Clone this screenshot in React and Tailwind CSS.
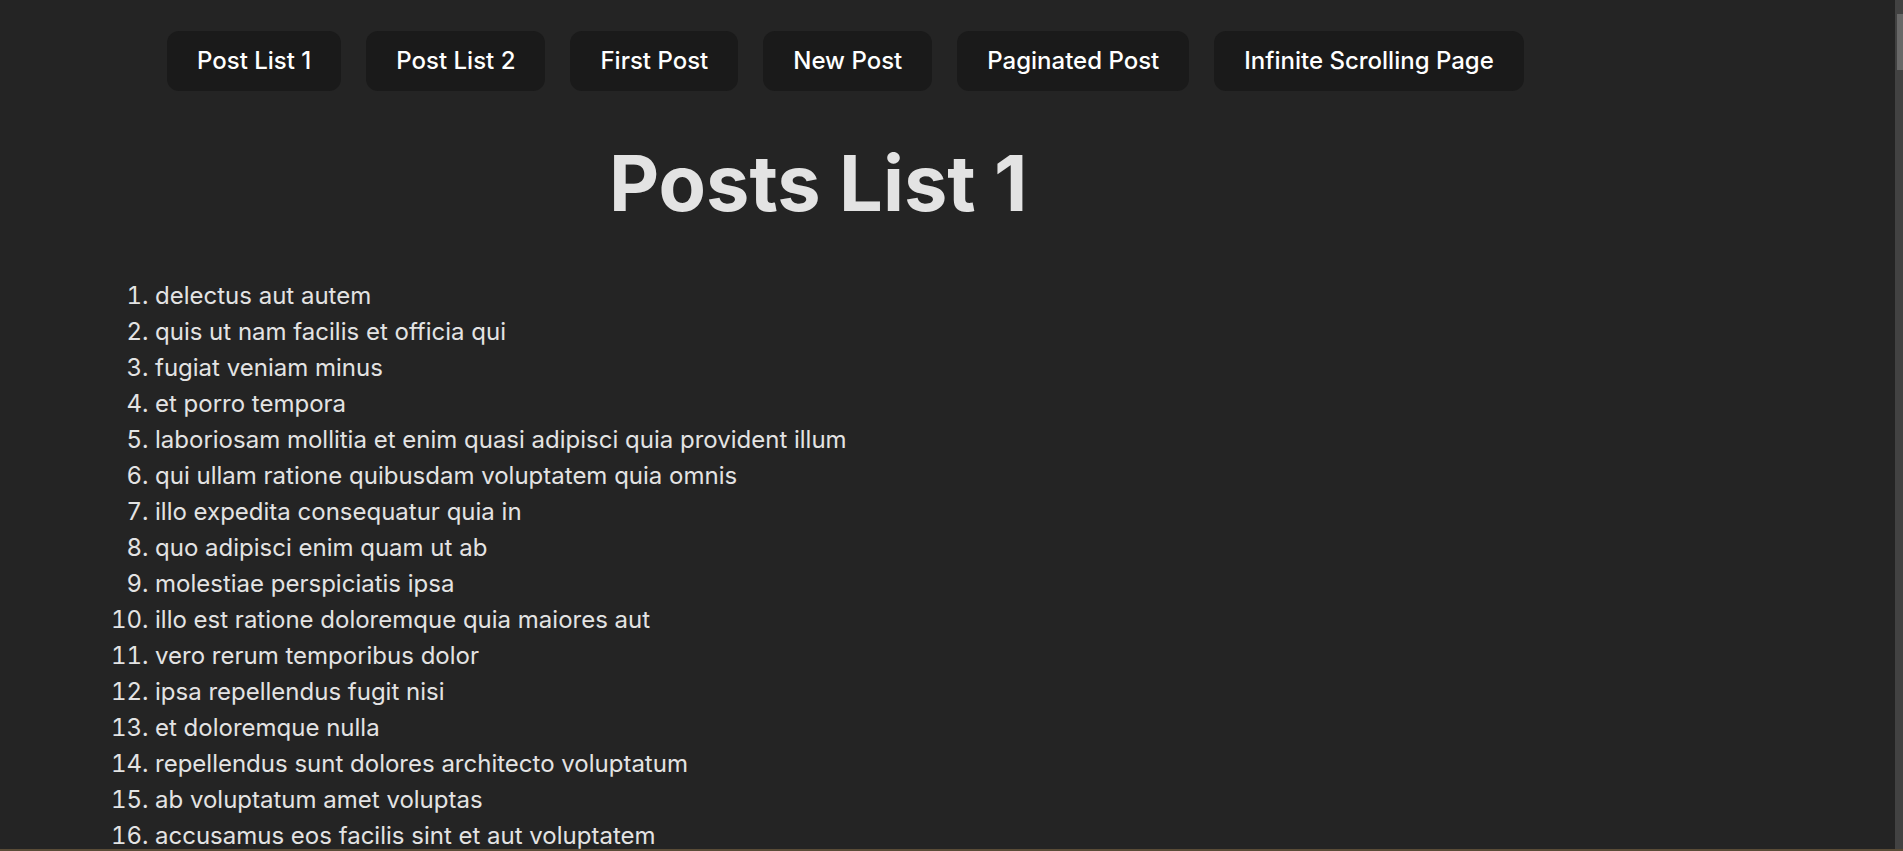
import React from 'react';

const links = [
  'Post List 1',
  'Post List 2',
  'First Post',
  'New Post',
  'Paginated Post',
  'Infinite Scrolling Page',
];

const todos = [
  'delectus aut autem',
  'quis ut nam facilis et officia qui',
  'fugiat veniam minus',
  'et porro tempora',
  'laboriosam mollitia et enim quasi adipisci quia provident illum',
  'qui ullam ratione quibusdam voluptatem quia omnis',
  'illo expedita consequatur quia in',
  'quo adipisci enim quam ut ab',
  'molestiae perspiciatis ipsa',
  'illo est ratione doloremque quia maiores aut',
  'vero rerum temporibus dolor',
  'ipsa repellendus fugit nisi',
  'et doloremque nulla',
  'repellendus sunt dolores architecto voluptatum',
  'ab voluptatum amet voluptas',
  'accusamus eos facilis sint et aut voluptatem',
  'quo laboriosam deleniti aut qui',
  'dolorum est consequatur ea mollitia in culpa',
  'molestiae ipsa aut voluptatibus pariatur dolor nihil',
  'ullam nobis libero sapiente ad optio sint',
  'vel voluptatem repellat nihil placeat corporis',
  'distinctio vitae autem nihil ut molestias quo',
  'et itaque necessitatibus maxime molestiae qui quas velit',
  'adipisci non ad dicta qui amet quaerat doloribus ea',
  'voluptas quo tenetur perspiciatis explicabo natus',
  'aliquam aut quasi',
  'veritatis pariatur delectus',
  'nesciunt totam sit blanditiis sit',
  'laborum aut in quam',
  'nemo perspiciatis repellat ut dolor libero commodi blanditiis omnis',
  'repudiandae totam in est sint facere fuga',
  'earum doloribus ea doloremque quis',
  'sint sit aut vero',
  'porro aut necessitatibus eaque distinctio',
  'repellendus veritatis molestias dicta incidunt',
  'excepturi deleniti adipisci voluptatem et neque optio illum ad',
  'sunt cum tempora',
  'totam quia non',
  'doloremque quibusdam asperiores libero corrupti illum qui omnis',
  'totam atque quo nesciunt',
];

export default function App() {
  return (
    <div className="h-screen overflow-y-scroll bg-[#242424] font-['Inter',sans-serif] text-white/87 [scrollbar-width:none]">
      {/* Nav */}
      <nav className="flex gap-[25px] pt-[31px] pl-[167px]">
        {links.map((l) => (
          <button
            key={l}
            className="rounded-xl bg-[#1a1a1a] px-[30px] py-3 text-2xl leading-9 font-medium text-white"
          >
            {l}
          </button>
        ))}
      </nav>

      <h1 className="mt-[50px] pl-[609px] text-[77.5px] leading-[1.1] font-bold text-[#e3e3e3]">
        Posts List 1
      </h1>

      {/* Todo list */}
      <ol className="mt-[52px] list-decimal pl-[155px] pb-[11000px] text-2xl leading-9 text-[#e3e3e3]">
        {todos.map((t) => (
          <li key={t}>{t}</li>
        ))}
      </ol>

      {/* scrollbar */}
      <div className="fixed top-0 right-0 bottom-0 w-2 bg-[#424242]">
        <div className="mt-[14px] ml-[2px] h-14 bg-[#686868]" />
      </div>

      <div className="fixed bottom-0 left-0 right-0 h-[2px] bg-[#5a4c37]" />
    </div>
  );
}
